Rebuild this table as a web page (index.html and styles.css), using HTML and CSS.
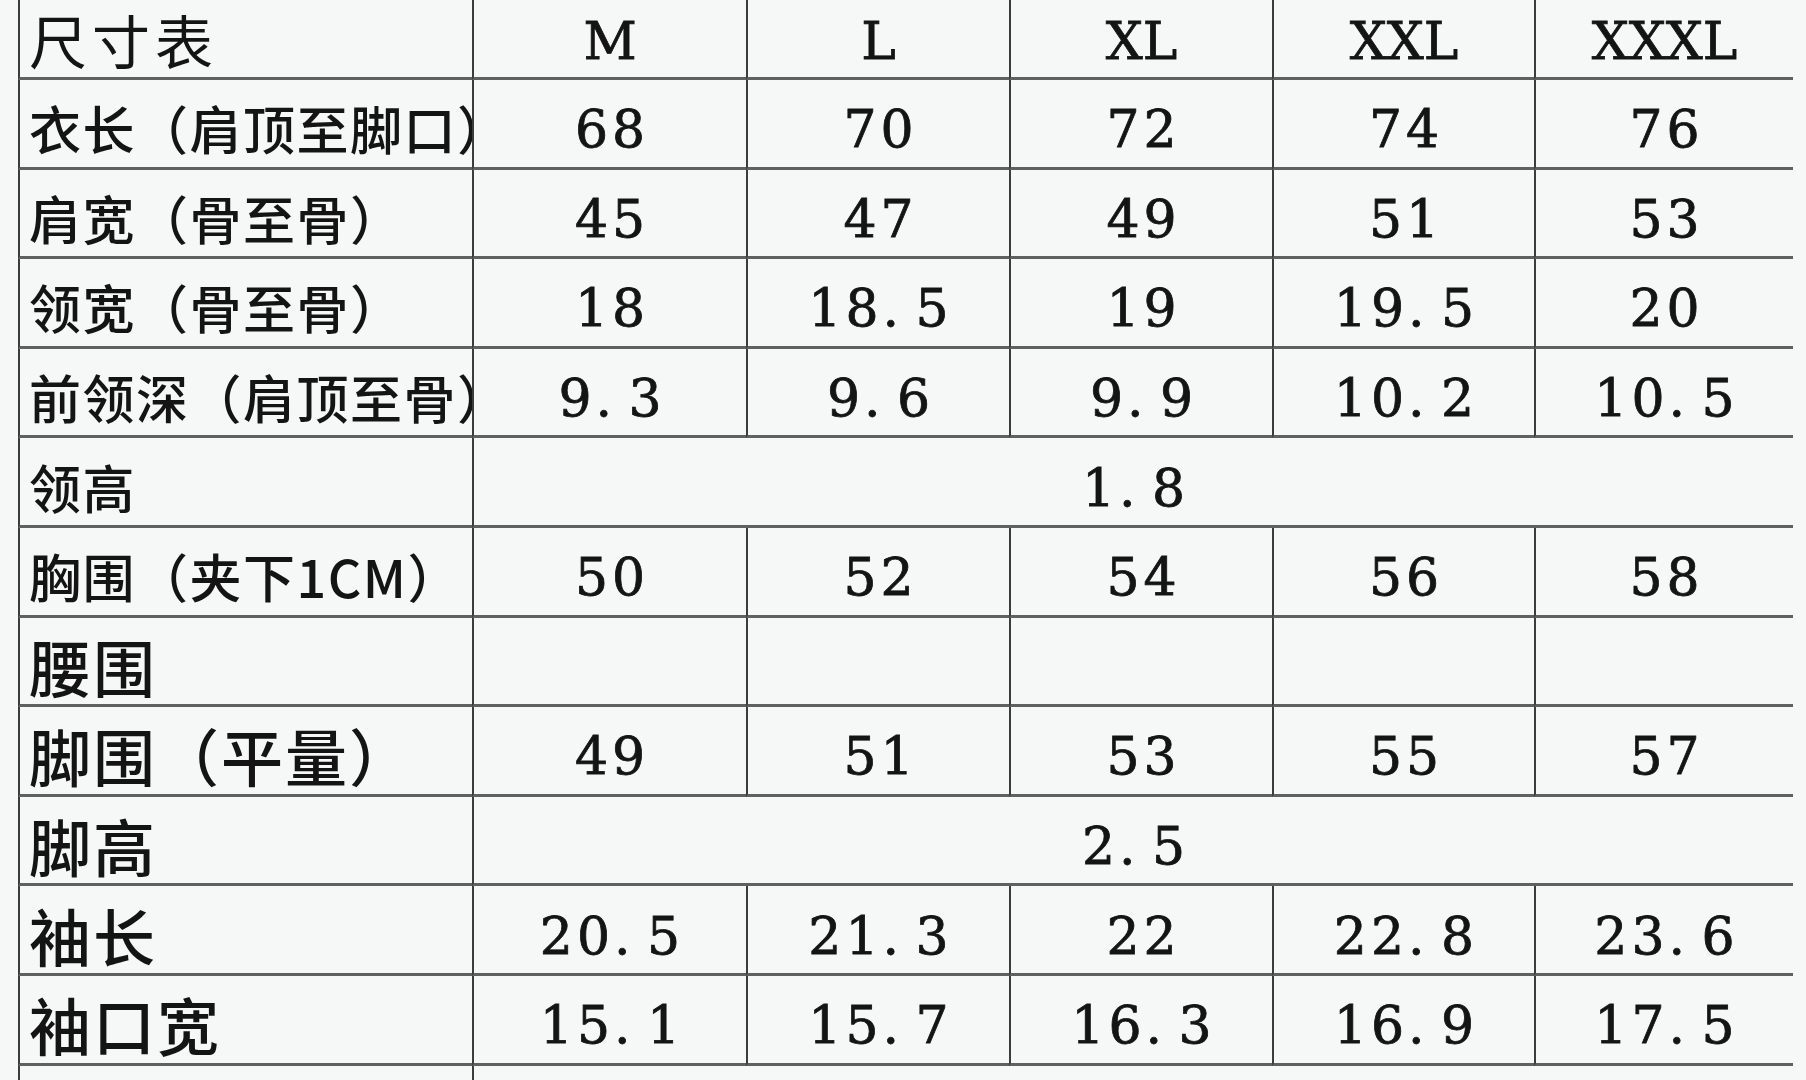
FILE: index.html
```html
<!DOCTYPE html>
<html lang="zh-CN">
<head>
<meta charset="utf-8">
<title>尺寸表</title>
<link rel="stylesheet" href="styles.css">
</head>
<body>
<div class="sheet">
  <table class="size-table">
    <colgroup>
      <col class="c-label">
      <col class="c1">
      <col class="c2">
      <col class="c3">
      <col class="c4">
      <col class="c5">
    </colgroup>
    <thead>
      <tr class="head">
        <th class="label title">尺寸表</th>
        <th class="size">M</th>
        <th class="size">L</th>
        <th class="size">XL</th>
        <th class="size">XXL</th>
        <th class="size">XXXL</th>
      </tr>
    </thead>
    <tbody>
      <tr>
        <td class="label">衣长（肩顶至脚口）</td>
        <td>68</td><td>70</td><td>72</td><td>74</td><td>76</td>
      </tr>
      <tr>
        <td class="label">肩宽（骨至骨）</td>
        <td>45</td><td>47</td><td>49</td><td>51</td><td>53</td>
      </tr>
      <tr>
        <td class="label">领宽（骨至骨）</td>
        <td>18</td><td>18<span class="dot">.</span>5</td><td>19</td><td>19<span class="dot">.</span>5</td><td>20</td>
      </tr>
      <tr>
        <td class="label">前领深（肩顶至骨）</td>
        <td>9<span class="dot">.</span>3</td><td>9<span class="dot">.</span>6</td><td>9<span class="dot">.</span>9</td><td>10<span class="dot">.</span>2</td><td>10<span class="dot">.</span>5</td>
      </tr>
      <tr>
        <td class="label">领高</td>
        <td colspan="5">1<span class="dot">.</span>8</td>
      </tr>
      <tr>
        <td class="label">胸围（夹下1CM）</td>
        <td>50</td><td>52</td><td>54</td><td>56</td><td>58</td>
      </tr>
      <tr>
        <td class="label big">腰围</td>
        <td></td><td></td><td></td><td></td><td></td>
      </tr>
      <tr>
        <td class="label big">脚围（平量）</td>
        <td>49</td><td>51</td><td>53</td><td>55</td><td>57</td>
      </tr>
      <tr>
        <td class="label big">脚高</td>
        <td colspan="5">2<span class="dot">.</span>5</td>
      </tr>
      <tr>
        <td class="label big">袖长</td>
        <td>20<span class="dot">.</span>5</td><td>21<span class="dot">.</span>3</td><td>22</td><td>22<span class="dot">.</span>8</td><td>23<span class="dot">.</span>6</td>
      </tr>
      <tr>
        <td class="label big">袖口宽</td>
        <td>15<span class="dot">.</span>1</td><td>15<span class="dot">.</span>7</td><td>16<span class="dot">.</span>3</td><td>16<span class="dot">.</span>9</td><td>17<span class="dot">.</span>5</td>
      </tr>
      <tr class="tail">
        <td class="label"></td>
        <td colspan="5"></td>
      </tr>
    </tbody>
  </table>
</div>
</body>
</html>
```
FILE: styles.css
```css
html, body {
  margin: 0;
  padding: 0;
  overflow: hidden;
  background: #f6f7f7;
}

body {
  font-family: "DejaVu Serif", "Liberation Serif", serif;
  color: #141414;
}

.sheet {
  padding-left: 18px;
}

.size-table {
  border-collapse: separate;
  border-spacing: 0;
  table-layout: fixed;
  width: 1775px;
}

.c-label { width: 454px; }
.c1 { width: 274px; }
.c2 { width: 263px; }
.c3 { width: 263px; }
.c4 { width: 262px; }
.c5 { width: 259px; }

.size-table tr {
  height: 89.6px;
}

.size-table tr.head {
  height: 80px;
}

.size-table tr.tail {
  height: 40px;
}

.size-table th,
.size-table td {
  box-sizing: border-box;
  border-left: 2px solid #3c3c3c;
  border-bottom: 3px solid #606060;
  padding: 12px 0 0 4px;
  text-align: center;
  vertical-align: middle;
  white-space: nowrap;
  overflow: hidden;
  font-size: 52px;
  font-weight: 400;
  line-height: 1;
  letter-spacing: 4px;
  -webkit-text-stroke: 0.8px #141414;
}

.size-table th.size {
  padding-top: 4px;
  letter-spacing: 0;
  padding-left: 0;
}

.dot {
  display: inline-block;
  width: 33px;
  text-align: left;
}

.size-table .label {
  font-family: "Noto Sans CJK SC", "Noto Sans CJK JP", sans-serif;
  font-size: 52px;
  font-weight: 500;
  letter-spacing: 1.5px;
  text-spacing-trim: space-all;
  text-align: left;
  padding-left: 9px;
  padding-top: 10px;
  -webkit-text-stroke: 0;
}

.size-table .label.big {
  font-size: 62px;
  letter-spacing: 2px;
}

.size-table .label.title {
  font-size: 58px;
  font-weight: 400;
  letter-spacing: 5px;
  padding-top: 0;
}

.size-table tr.tail td {
  border-bottom: none;
}
```
